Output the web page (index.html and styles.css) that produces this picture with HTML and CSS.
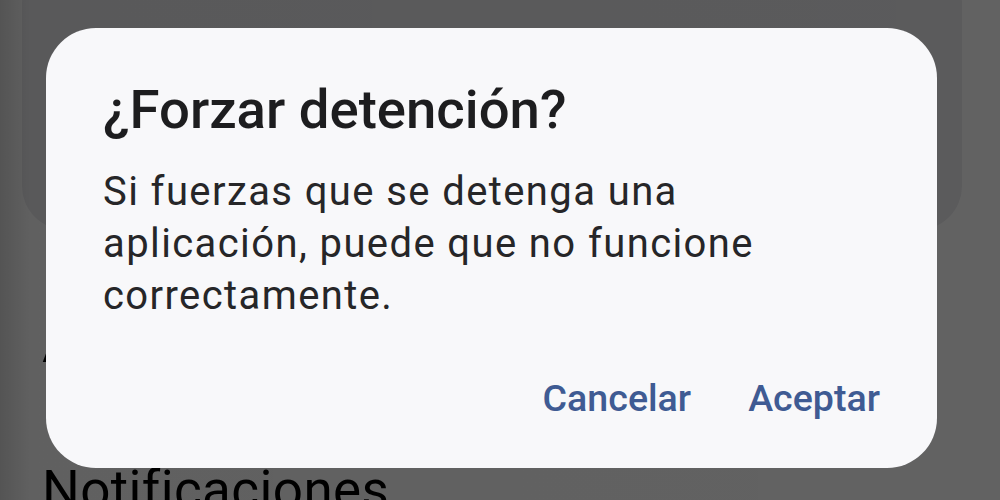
FILE: index.html
```html
<!DOCTYPE html>
<html lang="es">
<head>
<meta charset="utf-8">
<title>¿Forzar detención?</title>
<link rel="stylesheet" href="styles.css">
</head>
<body>
<div class="screen">
  <div class="bg-card"></div>
  <div class="bg-row bg-row-first">Almacenamiento</div>
  <div class="bg-row bg-row-next">Notificaciones</div>
</div>
<div class="scrim"></div>
<div class="dialog" role="dialog">
  <h1 class="dialog-title">¿Forzar detención?</h1>
  <p class="dialog-body">Si fuerzas que se detenga una aplicación, puede que no funcione correctamente.</p>
  <div class="dialog-actions">
    <button class="dialog-btn">Cancelar</button>
    <button class="dialog-btn">Aceptar</button>
  </div>
</div>
</body>
</html>
```

FILE: styles.css
```css
html, body {
  margin: 0;
  padding: 0;
  width: 1000px;
  height: 500px;
  overflow: hidden;
}
body {
  position: relative;
  font-family: Roboto, "Noto Sans", "Liberation Sans", sans-serif;
  background: #ffffff;
}
.screen {
  display: flex;
  flex-direction: column;
  padding: 0 0 0 42px;
}
.bg-card {
  margin: -40px 38px 0 -20px;
  height: 270px;
  border-radius: 44px;
  background: #ececef;
}
.bg-row {
  font-size: 53px;
  line-height: 56px;
  letter-spacing: 0.4px;
  color: #000;
  white-space: nowrap;
}
.bg-row-first {
  margin-top: 86px;
}
.bg-row-next {
  margin-top: 90px;
}
.scrim {
  position: absolute;
  inset: 0;
  background: linear-gradient(to right, rgba(0,0,0,0.67) 0, rgba(0,0,0,0.625) 30px, rgba(0,0,0,0.615) 100%);
}
.dialog {
  position: absolute;
  left: 46px;
  top: 28px;
  width: 891px;
  height: 440px;
  box-sizing: border-box;
  padding: 51px 57px 44px 57px;
  background: #f8f8fa;
  border-radius: 50px;
  display: flex;
  flex-direction: column;
}
.dialog-title {
  margin: 0;
  font-size: 54.5px;
  line-height: 60px;
  font-weight: 500;
  color: #1d1d1f;
}
.dialog-body {
  margin: 27px 0 0 0;
  font-size: 40px;
  line-height: 52px;
  letter-spacing: 1.4px;
  font-weight: 400;
  color: #262628;
  max-width: 700px;
}
.dialog-actions {
  margin-top: 50px;
  display: flex;
  justify-content: flex-end;
  gap: 57px;
}
.dialog-btn {
  border: 0;
  background: none;
  padding: 0;
  font-family: inherit;
  font-size: 37.6px;
  line-height: 52px;
  font-weight: 500;
  color: #3f5b93;
}
```
